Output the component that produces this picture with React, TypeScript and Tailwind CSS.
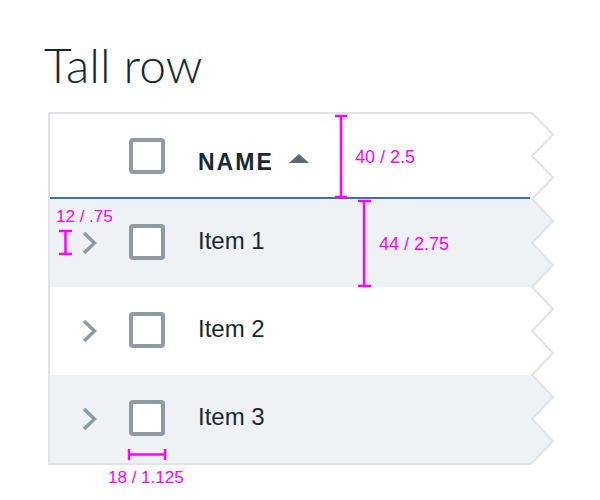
const rows = ['Item 1', 'Item 2', 'Item 3']

function Checkbox({ className = '' }: { className?: string }) {
    return <div className={`h-[36px] w-[36px] shrink-0 rounded-[4px] border-4 border-[#8c9ba5] bg-white ${className}`} />
}

function Chevron() {
    return (
        <svg width="16" height="24" viewBox="0 0 16 24" className="ml-[31px]">
            <path d="M3 2 L13.5 12 L3 22" fill="none" stroke="#8c9ba5" strokeWidth="3.5" strokeLinejoin="miter" />
        </svg>
    )
}

// torn right edge of the table, one column of teeth
function TornEdge() {
    const bands = [
        { y: 1, h: 86, fill: 'none' },
        { y: 87, h: 88, fill: '#eff2f5' },
        { y: 175, h: 88, fill: 'none' },
        { y: 263, h: 88, fill: '#eff2f5' },
    ]
    const teeth = (y: number, h: number) =>
        `2,${y} 23,${y + h / 4} 2,${y + h / 2} 23,${y + (3 * h) / 4} 2,${y + h}`

    return (
        <svg width="28" height="353" viewBox="0 0 28 353" className="shrink-0">
            {bands.map((b) =>
                b.fill === 'none' ? null : (
                    <polygon key={b.y} points={`0,${b.y} ${teeth(b.y, b.h)} 0,${b.y + b.h}`} fill={b.fill} />
                )
            )}
            <polyline
                points={`0,1 ${bands.map((b) => teeth(b.y, b.h)).join(' ')} 0,352`}
                fill="none"
                stroke="#dfe3e6"
                strokeWidth="2"
            />
        </svg>
    )
}

function Measures() {
    const c = '#ff00ff'
    return (
        <svg width="600" height="500" className="pointer-events-none absolute left-0 top-0">
            <g stroke={c} strokeWidth="2.5">
                <line x1="341" y1="116" x2="341" y2="197" />
                <line x1="335" y1="116" x2="347" y2="116" />
                <line x1="335" y1="197" x2="347" y2="197" />

                <line x1="364" y1="201" x2="364" y2="286" />
                <line x1="358" y1="201" x2="371" y2="201" />
                <line x1="358" y1="286" x2="371" y2="286" />

                <line x1="65.5" y1="231" x2="65.5" y2="254" />
                <line x1="59" y1="231" x2="72" y2="231" />
                <line x1="59" y1="254" x2="72" y2="254" />

                <line x1="129" y1="454.5" x2="165" y2="454.5" />
                <line x1="129" y1="449" x2="129" y2="460" />
                <line x1="165" y1="449" x2="165" y2="460" />
            </g>
        </svg>
    )
}

function App() {
    return (
        <div className="relative h-[500px] w-[600px] overflow-hidden bg-white text-[#152935]" style={{ fontFamily: '"Liberation Sans", Arial, sans-serif' }}>
            <h1 className="pl-[44px] pt-[41px] text-[48px] font-light leading-none" style={{ fontFamily: 'Lato, "Liberation Sans", sans-serif' }}>
                Tall row
            </h1>

            <div className="ml-[48px] mt-[23px] flex">
                <div className="w-[482px] border-b-2 border-l-2 border-t-2 border-[#dfe3e6]">
                    <div className="flex h-[85px] items-center border-b-2 border-[#3d70b2] bg-white">
                        <div className="w-[79px] shrink-0" />
                        <Checkbox />
                        <span className="ml-[33px] mt-[14px] text-[23px] font-bold uppercase leading-none tracking-[2px]">Name</span>
                        <svg width="20" height="9" viewBox="0 0 20 9" className="ml-[15px] mt-[6px]">
                            <polygon points="10,0 20,9 0,9" fill="#5a6872" />
                        </svg>
                    </div>

                    {rows.map((name, i) => (
                        <div key={name} className={`flex h-[88px] items-center ${i % 2 === 0 ? 'bg-[#eff2f5]' : 'bg-white'}`}>
                            <div className="w-[79px] shrink-0">
                                <Chevron />
                            </div>
                            <Checkbox className="-mt-[2px]" />
                            <span className="ml-[33px] -mt-[4px] text-[24px] leading-none">{name}</span>
                        </div>
                    ))}
                </div>
                <TornEdge />
            </div>

            <Measures />
            <span className="absolute left-[355px] top-[148px] text-[18px] leading-none text-[#ff00ff]">40 / 2.5</span>
            <span className="absolute left-[379px] top-[235px] text-[18px] leading-none text-[#ff00ff]">44 / 2.75</span>
            <span className="absolute left-[56px] top-[208px] text-[17px] leading-none text-[#ff00ff]">12 / .75</span>
            <span className="absolute left-[108px] top-[469px] text-[17px] leading-none text-[#ff00ff]">18 / 1.125</span>
        </div>
    )
}

export default App
